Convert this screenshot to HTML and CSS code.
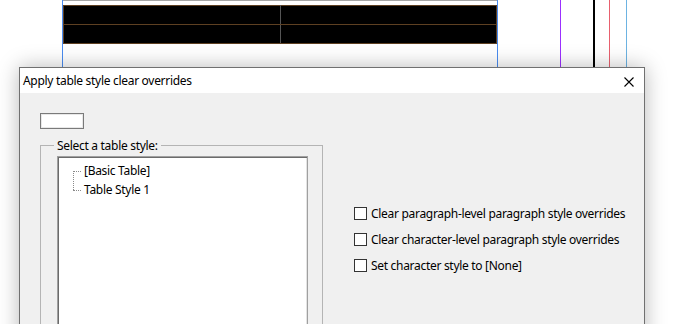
FILE: index.html
```html
<!doctype html>
<html lang="en">
<head>
<meta charset="utf-8">
<title>Apply table style clear overrides</title>
<link rel="stylesheet" href="styles.css">
</head>
<body>

<div class="page">
  <div class="guide guide-margin-left"></div>
  <div class="guide guide-margin-right"></div>
  <div class="guide guide-purple"></div>
  <div class="guide guide-black"></div>
  <div class="guide guide-red"></div>
  <div class="guide guide-cyan"></div>

  <div class="frame-top"></div>
  <table class="doc-table">
    <tr><td></td><td></td></tr>
    <tr><td></td><td></td></tr>
  </table>

  <div class="dialog">
    <div class="titlebar">
      <span class="title">Apply table style clear overrides</span>
      <span class="close">
        <svg width="10" height="10" viewBox="0 0 10 10"><path d="M0.5 0.5L9.5 9.5M9.5 0.5L0.5 9.5" stroke="#000" stroke-width="1.1" fill="none"/></svg>
      </span>
    </div>
    <div class="dialog-body">
      <div class="name-field"></div>
      <div class="main-row">
        <fieldset class="group">
          <legend>Select a table style:</legend>
          <div class="listbox">
            <ul class="tree">
              <li class="first">[Basic Table]</li>
              <li class="last">Table Style 1</li>
            </ul>
          </div>
        </fieldset>
        <div class="options">
          <label class="option"><span class="check"></span>Clear paragraph-level paragraph style overrides</label>
          <label class="option"><span class="check"></span>Clear character-level paragraph style overrides</label>
          <label class="option"><span class="check"></span>Set character style to [None]</label>
        </div>
      </div>
    </div>
  </div>
</div>

</body>
</html>
```

FILE: styles.css
```css
body {
  margin: 0;
  background: #fff;
  font-family: "Noto Sans", "Open Sans", sans-serif;
  font-size: 12px;
  letter-spacing: -0.3px;
  color: #000;
}
.page {
  position: relative;
  width: 697px;
  height: 324px;
  overflow: hidden;
}

/* guides on the layout canvas */
.guide {
  position: absolute;
  top: 0;
  height: 100%;
  width: 1px;
}
.guide-margin-left { left: 62px; background: #4a8cf0; }
.guide-margin-right { left: 497px; background: #4a8cf0; }
.guide-purple { left: 560px; background: #9b30ff; }
.guide-black { left: 593px; width: 2px; background: #000; }
.guide-red { left: 609px; background: #e8606e; }
.guide-cyan { left: 626px; background: #6db3e2; }

.frame-top {
  position: absolute;
  left: 63px;
  top: 0;
  width: 434px;
  height: 1px;
  background: #a6a6a6;
}
.doc-table {
  position: absolute;
  left: 63px;
  top: 5px;
  width: 434px;
  border-collapse: collapse;
  border: 1px solid #5e4022;
}
.doc-table td {
  background: #000;
  height: 18px;
  padding: 0;
  border-top: 1px solid #5e4022;
  border-bottom: 1px solid #5e4022;
}
.doc-table td:first-child {
  width: 216px;
  border-right: 1px solid #555;
}

/* dialog */
.dialog {
  position: absolute;
  left: 19px;
  top: 67px;
  width: 624px;
  height: 300px;
  border: 1px solid #707070;
  background: #f0f0f0;
  box-shadow: 0 0 20px rgba(0, 0, 0, 0.28);
}
.titlebar {
  height: 25px;
  background: #fff;
  display: flex;
  align-items: center;
  justify-content: space-between;
  padding: 0 10px 0 3px;
}
.close {
  display: flex;
  padding-top: 2px;
}
.close svg {
  display: block;
}

.dialog-body {
  padding: 20px 20px 0 20px;
}
.name-field {
  width: 42px;
  height: 14px;
  border: 1px solid #7a7a7a;
  background: #fff;
  box-shadow: inset 0 0 0 1px #e8e8e8;
}
.main-row {
  display: flex;
  margin-top: 9px;
}

.group {
  margin: 0;
  height: 200px;
  padding: 0 14px 0 16px;
  border: 1px solid #b4b4b4;
  box-sizing: border-box;
  width: 283px;
  flex-shrink: 0;
}
.group legend {
  padding: 0 3px;
  margin-left: -3px;
  line-height: 15px;
}
.listbox {
  margin-top: 3px;
  width: 251px;
  height: 200px;
  box-sizing: border-box;
  border: 1px solid #a0a0a0;
  background: #fff;
  box-shadow: inset 1px 1px 0 #6b6b6b, inset -1px -1px 0 #e3e3e3;
}
.tree {
  list-style: none;
  margin: 0;
  padding: 4px 0 0 26px;
}
.tree li {
  position: relative;
  height: 19px;
  line-height: 19px;
}
.tree li::before {
  content: "";
  position: absolute;
  left: -11px;
  top: 10px;
  width: 8px;
  border-top: 1px dotted #8a8a8a;
}
.tree li.first::after {
  content: "";
  position: absolute;
  left: -11px;
  top: 10px;
  height: 19px;
  border-left: 1px dotted #8a8a8a;
}

.options {
  display: flex;
  flex-direction: column;
  gap: 10px;
  margin: 67px 0 0 31px;
  white-space: nowrap;
}
.option {
  display: flex;
  align-items: center;
  height: 16px;
  gap: 4px;
}
.check {
  width: 11px;
  height: 11px;
  border: 1px solid #333;
  background: #fff;
}
```
